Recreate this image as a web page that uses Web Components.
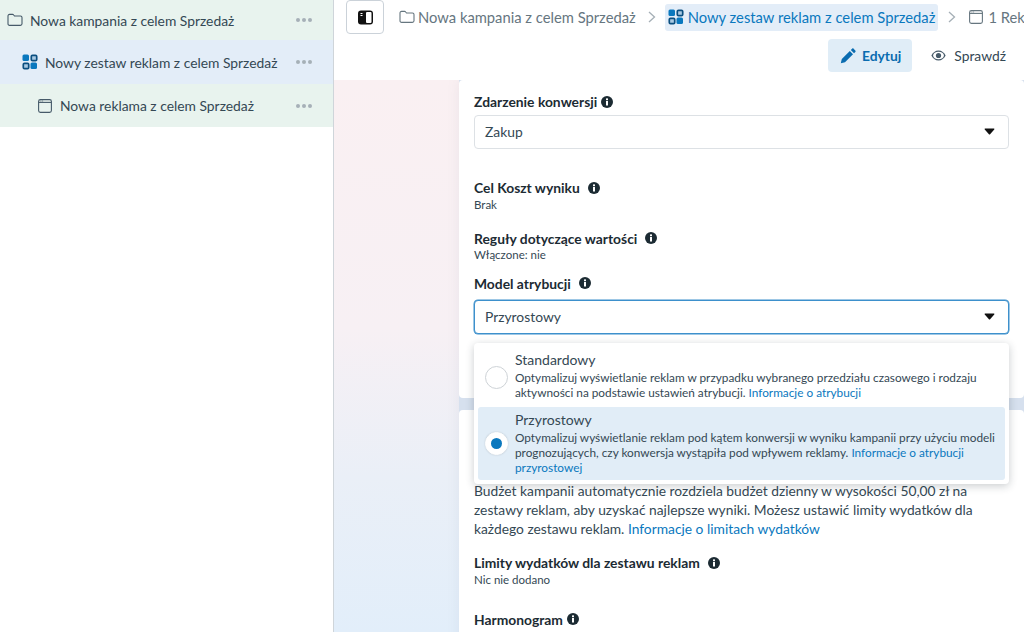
<!DOCTYPE html>
<html lang="pl">
<head>
<meta charset="utf-8">
<title>Nowy zestaw reklam</title>
<style>
    html, body { margin: 0; height: 632px; overflow: hidden; background: #fff; }
    body { font-family: Lato, "Noto Sans", sans-serif; color: #1c2b33; }
    app-shell { height: 632px; }
</style>
</head>
<body>
<app-shell>
    <side-tree slot="side">
        <tree-row kind="campaign" indent="0" tint="green">Nowa kampania z celem Sprzedaż</tree-row>
        <tree-row kind="adset" indent="15" tint="blue">Nowy zestaw reklam z celem Sprzedaż</tree-row>
        <tree-row kind="ad" indent="31" tint="green">Nowa reklama z celem Sprzedaż</tree-row>
    </side-tree>
    <top-bar slot="top"></top-bar>
    <form-canvas slot="main">
        <form-card style="height:318px">
            <field-label top="13">Zdarzenie konwersji</field-label>
            <select-box top="5">Zakup</select-box>
            <field-label top="30" gap="wide" note="Brak">Cel Koszt wyniku</field-label>
            <field-label top="18" gap="wide" note="Włączone: nie">Reguły dotyczące wartości</field-label>
            <field-label top="12.500" gap="wide">Model atrybucji</field-label>
            <select-box top="8.500" active>Przyrostowy</select-box>
        </form-card>
        <form-card style="height:240px">
            <para-text top="71">Budżet kampanii automatycznie rozdziela budżet dzienny w wysokości 50,00 zł na zestawy reklam, aby uzyskać najlepsze wyniki. Możesz ustawić limity wydatków dla każdego zestawu reklam. <a-link>Informacje o limitach wydatków</a-link></para-text>
            <field-label top="16" gap="wide" note="Nic nie dodano">Limity wydatków dla zestawu reklam</field-label>
            <field-label top="24">Harmonogram</field-label>
        </form-card>
        <attr-menu>
            <radio-option title="Standardowy">Optymalizuj wyświetlanie reklam w przypadku wybranego przedziału czasowego i rodzaju aktywności na podstawie ustawień atrybucji. <a-link>Informacje o atrybucji</a-link></radio-option>
            <radio-option title="Przyrostowy" selected>Optymalizuj wyświetlanie reklam pod kątem konwersji w wyniku kampanii przy użyciu modeli prognozujących, czy konwersja wystąpiła pod wpływem reklamy. <a-link>Informacje o atrybucji przyrostowej</a-link></radio-option>
        </attr-menu>
    </form-canvas>
</app-shell>

<script>
const ICONS = {
    campaign: `<svg width="16" height="14" viewBox="0 0 16 14" fill="none" stroke="currentColor" stroke-width="1.100"><path d="M1 3c0-1 .6-1.600 1.600-1.600h3c.5 0 .8.200 1.100.6l.8 1h5.900c1 0 1.600.6 1.600 1.600v6.200c0 1-.6 1.600-1.600 1.600H2.600C1.600 12.400 1 11.800 1 10.800z"/></svg>`,
    adset: `<svg width="16" height="16" viewBox="0 0 16 16"><rect x="0.500" y="0.500" width="6.500" height="6.500" rx="1.500" fill="#0a78be"/><rect x="9.300" y="1.300" width="5.400" height="5.400" rx="1.200" fill="#a9c9e2" stroke="#0b4f80" stroke-width="1.700"/><rect x="1.300" y="9.300" width="5.400" height="5.400" rx="1.200" fill="#a9c9e2" stroke="#0b4f80" stroke-width="1.700"/><rect x="8.500" y="8.500" width="6.500" height="6.500" rx="1.500" fill="#0a78be"/></svg>`,
    ad: `<svg width="14" height="14" viewBox="0 0 14 14" fill="none" stroke="currentColor" stroke-width="1.100"><rect x="0.600" y="0.600" width="12.800" height="12.800" rx="1.800"/><path d="M.6 3.400h12.800"/><path d="M2.500 2h.8M4.300 2h.8" stroke-width="1"/></svg>`
};
const CHEVRON = `<svg width="8" height="12" viewBox="0 0 8 12" fill="none" stroke="#a5afb6" stroke-width="1.300"><path d="M1 1l5.500 5L1 11"/></svg>`;

function define(name, styles, markup, setup) {
    customElements.define(name, class extends HTMLElement {
        connectedCallback() {
            if (this.shadowRoot) return;
            this.attachShadow({ mode: 'open' });
            this.shadowRoot.innerHTML = `<style>${styles}</style>${markup(this)}`;
            if (setup) setup(this);
        }
    });
}

define('app-shell', `
    :host { display: grid; grid-template-columns: 334px 1fr; grid-template-rows: 80px 1fr; }
    .side { grid-row: 1 / 3; border-right: 1px solid #cfd5da; overflow: hidden; }
    .main { min-width: 0; min-height: 0; }
`, () => `
    <div class="side"><slot name="side"></slot></div>
    <div class="main"><slot name="top"></slot></div>
    <div class="main"><slot name="main"></slot></div>
`);

define('side-tree', `:host { display: block; }`, () => `<slot></slot>`);

define('tree-row', `
    :host { display: flex; align-items: center; height: 40px; padding-right: 21px; font-size: 13.850px; color: #344854; }
    :host([kind="adset"]) { height: 44px; }
    :host([kind="ad"]) { height: 43px; }
    :host([kind="ad"]) .ico { margin-right: 8px; }
    .ico { display: flex; margin-right: 7px; color: #465a69; }
    .ico svg { display: block; }
    .txt { flex: 1; white-space: nowrap; }
    .dots { display: flex; gap: 2px; }
    .dots i { width: 4px; height: 4px; border-radius: 50%; background: #a6b0b7; }
`, el => {
    el.style.background = el.getAttribute('tint') === 'blue' ? '#e3edf8' : '#e8f3ee';
    el.style.paddingLeft = (7 + Number(el.getAttribute('indent'))) + 'px';
    return `<span class="ico">${ICONS[el.getAttribute('kind')]}</span><span class="txt"><slot></slot></span><span class="dots"><i></i><i></i><i></i></span>`;
});

define('top-bar', `
    :host { display: block; height: 80px; overflow: hidden; background: #fff; }
    .crumbs { display: flex; align-items: center; height: 34px; padding: 0 0 0 12px; white-space: nowrap; font-size: 14.750px; color: #66767f; }
    .toggle { flex: none; width: 36px; height: 32px; border: 1px solid #cbd2d9; border-radius: 4px; display: flex; align-items: center; justify-content: center; margin-right: 15px; box-sizing: content-box; }
    .crumb { display: flex; align-items: center; gap: 3px; }
    .crumb.on { background: #e3edf8; color: #0a78be; border-radius: 3px; height: 27px; padding: 0 3px; gap: 4px; }
    .crumb svg, .chev { flex: none; }
    .chev { display: flex; margin: 0 9px 0 12px; }
    .chev.second { margin: 0 13px 0 10px; }
    .actions { display: flex; justify-content: flex-end; align-items: center; gap: 19px; padding: 5px 18px 0 0; font-size: 13.850px; }
    .edit { display: flex; align-items: center; gap: 6px; height: 33px; padding: 0 11px 0 12px; border-radius: 4px; background: #e0edf7; color: #0a6cb0; font-weight: 700; }
    .check { display: flex; align-items: center; gap: 8px; color: #344854; }
`, () => `
    <div class="crumbs">
        <span class="toggle"><svg width="15" height="15" viewBox="0 0 15 15"><rect x="0" y="0.500" width="15" height="14" rx="3" fill="#111"/><rect x="8" y="2" width="5.500" height="11" rx="1" fill="#fff"/><path d="M2.500 3.500h2M2.500 5.500h2" stroke="#fff" stroke-width="1"/></svg></span>
        <span class="crumb">${ICONS.campaign}Nowa kampania z celem Sprzedaż</span>
        <span class="chev">${CHEVRON}</span>
        <span class="crumb on">${ICONS.adset}Nowy zestaw reklam z celem Sprzedaż</span>
        <span class="chev second">${CHEVRON}</span>
        <span class="crumb" style="gap:5px">${ICONS.ad}1 Reklama</span>
    </div>
    <div class="actions">
        <span class="edit"><svg width="16" height="16" viewBox="0 0 16 16" fill="#0a6cb0"><path d="M0.800 15.200l1-4.200 8-8 3.200 3.200-8 8z"/><path d="M10.800 2l1.300-1.300c.5-.5 1.100-.5 1.500 0l1.700 1.700c.5.500.5 1 0 1.500L14 5.200z"/></svg>Edytuj</span>
        <span class="check"><svg width="15" height="11" viewBox="0 0 15 11"><path d="M7.500 0.500C4.300 0.500 1.700 2.600 0.400 5.500c1.300 2.900 3.900 5 7.100 5s5.800-2.100 7.100-5C13.300 2.600 10.700 0.500 7.500 0.500z" fill="#465a69"/><ellipse cx="7.500" cy="5.500" rx="5.400" ry="3.800" fill="#fff"/><circle cx="7.500" cy="5.500" r="2.600" fill="#465a69"/></svg>Sprawdź</span>
    </div>
`);

define('form-canvas', `
    :host { display: block; height: 552px; overflow: hidden; padding-left: 125px; position: relative;
        background: linear-gradient(180deg, #faf0f2 0%, #f7f0f4 45%, #eaeff7 72%, #e2eefa 100%); }
    .col { display: flex; flex-direction: column; gap: 12px; background: #d6e0ee; box-shadow: 0 0 12px rgba(120, 130, 150, 0.100); }
`, () => `<div class="col"><slot></slot></div>`);

define('form-card', `
    :host { display: flex; flex: none; flex-direction: column; box-sizing: border-box; padding: 0 15px; background: #fff; border-radius: 4px; }
`, () => `<slot></slot>`);

define('field-label', `
    :host { display: block; font-size: 13.850px; line-height: 17px; color: #1c2b33; }
    .head { display: flex; align-items: center; gap: 4px; font-weight: 700; white-space: nowrap; }
    :host([gap="wide"]) .head { gap: 8px; }
    svg { flex: none; }
    .note { font-size: 11.500px; line-height: 14px; color: #344854; margin-top: 1.500px; }
`, el => {
    el.style.marginTop = el.getAttribute('top') + 'px';
    const note = el.getAttribute('note');
    return `<div class="head"><span><slot></slot></span><svg width="12" height="12" viewBox="0 0 12 12"><circle cx="6" cy="6" r="6" fill="#1c2b33"/><rect x="5" y="5" width="2" height="4.500" fill="#fff"/><rect x="5" y="2.400" width="2" height="1.800" fill="#fff"/></svg></div>${note ? `<div class="note">${note}</div>` : ''}`;
});

define('select-box', `
    :host { display: flex; align-items: center; justify-content: space-between; flex: none; box-sizing: border-box; height: 34px; padding: 0 13px 2px 10px; border: 1px solid #dde1e5; border-radius: 4px; font-size: 13.850px; color: #344854; background: #fff; }
    :host([active]) { border-color: #3d90cc; box-shadow: 0 0 0 0.500px #3d90cc; }
    svg { display: block; }
`, el => {
    el.style.marginTop = el.getAttribute('top') + 'px';
    return `<span><slot></slot></span><svg width="11" height="7" viewBox="0 0 12 8"><path d="M1.200 0.500h9.600c.7 0 1 .7.6 1.200L6.700 7.200c-.4.400-1 .4-1.400 0L.6 1.700C.2 1.200.5.500 1.200.500z" fill="#111"/></svg>`;
});

define('para-text', `
    :host { display: block; font-size: 13.800px; line-height: 19px; color: #344854; }
`, el => {
    el.style.marginTop = el.getAttribute('top') + 'px';
    return `<slot></slot>`;
});

define('a-link', `:host { display: inline; color: #0a78be; }`, () => `<slot></slot>`);

define('attr-menu', `
    :host { position: absolute; left: 140px; top: 263px; width: 535px; height: 141px; box-sizing: border-box; padding: 4px; background: #fff; border-radius: 4px; box-shadow: 0 2px 8px rgba(28, 43, 51, 0.240); display: flex; flex-direction: column; }
`, () => `<slot></slot>`);

define('radio-option', `
    :host { display: flex; align-items: center; gap: 7px; padding: 0 7px; border-radius: 3px; font-size: 11.800px; line-height: 15px; color: #344854; flex: none; }
    :host([selected]) { background: #e1edf7; height: 73px; }
    :host(:not([selected])) { height: 60px; }
    .dot { flex: none; width: 21px; height: 21px; border-radius: 50%; border: 1px solid #ced3d7; background: #fff; box-sizing: content-box; display: flex; align-items: center; justify-content: center; }
    :host([selected]) .dot { border-color: #fff; box-shadow: 0 0 2px rgba(0,0,0,.15); }
    :host([selected]) .dot::after { content: ""; width: 11px; height: 11px; border-radius: 50%; background: #0a78be; }
    .body { align-self: flex-start; padding-top: 3.500px; }
    .t { font-size: 14px; line-height: 17px; margin-bottom: 2px; }
`, el => `<span class="dot"></span><div class="body"><div class="t">${el.getAttribute('title')}</div><slot></slot></div>`);
</script>
</body>
</html>
